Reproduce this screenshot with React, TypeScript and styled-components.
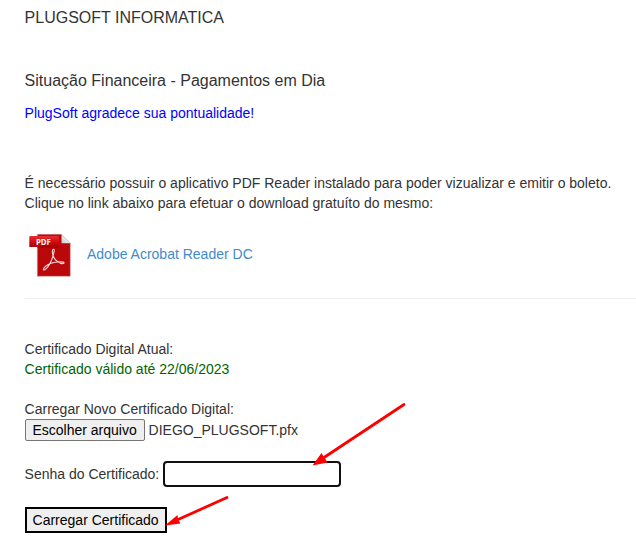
import { useState } from 'react';
import styled, { createGlobalStyle } from 'styled-components';

const GlobalStyle = createGlobalStyle`
  body {
    margin: 0;
    background: #fff;
    overflow: hidden;
  }
`;

const Page = styled.main`
  position: relative;
  height: 544px;
  padding: 8px 0 0 24.6px;
  box-sizing: border-box;
  color: #333;
  font-family: "Liberation Sans", Arial, sans-serif;
  font-size: 14px;
  line-height: 20px;
  white-space: nowrap;
`;

const Title = styled.h1<{ $gap: number }>`
  margin: 0 0 ${props => props.$gap}px;
  font-size: 16px;
  font-weight: 400;
  line-height: 20px;
`;

const Message = styled.p<{ $color?: string }>`
  margin: 0;
  color: ${props => props.$color || 'inherit'};
`;

const Instructions = styled.p`
  margin: 50px 0 20px;
`;

const ReaderRow = styled.div`
  display: flex;
  align-items: center;
  height: 43px;
  gap: 14px;
  padding-left: 3.4px;
`;

const ReaderLink = styled.a`
  color: #428bca;
  text-decoration: none;
  margin-top: -1px;
`;

const Divider = styled.hr`
  margin: 22px 0 40px;
  border: 0;
  border-top: 1px solid #eee;
`;

const Form = styled.form`
  margin-top: 20px;
`;

const FileRow = styled.div`
  display: flex;
  align-items: center;
  gap: 4px;
  height: 22px;
`;

const FileButton = styled.button`
  width: 120px;
  height: 22px;
  padding: 0;
  border: 1px solid #767676;
  border-radius: 2px;
  background: #efefef;
  color: #000;
  font: inherit;
  line-height: 18px;
`;

const PasswordRow = styled.label`
  display: flex;
  align-items: center;
  gap: 3.6px;
  height: 26px;
  margin: 20px 0;
`;

const PasswordInput = styled.input`
  width: 178px;
  height: 26px;
  box-sizing: border-box;
  padding: 2px 5px;
  border: 2px solid #101010;
  border-radius: 4px;
  outline: none;
  background: #fff;
  font: inherit;
`;

const SubmitButton = styled.button`
  display: block;
  width: 142px;
  height: 26px;
  padding: 0;
  border: 2px solid #000;
  background: #efefef;
  color: #000;
  font: inherit;
`;

const Annotations = styled.svg`
  position: absolute;
  inset: 0;
  pointer-events: none;
`;

const PdfLabel = styled.text`
  fill: #fff;
  font-family: "Open Sans", sans-serif;
  font-size: 9px;
  font-weight: 700;
`;

function PdfIcon() {
  return (
    <svg width="45" height="44" viewBox="0 0 45 44">
      <defs>
        <linearGradient id="ribbon" x1="0" y1="0" x2="0" y2="1">
          <stop offset="0" stopColor="#e8302f" />
          <stop offset="0.5" stopColor="#d20c10" />
          <stop offset="1" stopColor="#a60004" />
        </linearGradient>
        <linearGradient id="fold" x1="0" y1="1" x2="1" y2="0">
          <stop offset="0" stopColor="#c9c9c9" />
          <stop offset="0.65" stopColor="#f7f7f7" />
        </linearGradient>
      </defs>
      <path d="M9.3 1.3h24.2l8.8 9v33h-33z" fill="#ba0709" stroke="#d1a3a3" strokeWidth=".5" />
      <path d="M33.5 1.3l8.8 9h-8.8z" fill="url(#fold)" />
      <path d="M9.3 13.5h21.5V15H9.3z" fill="#900004" opacity=".6" />
      <path d="M2.3 3h27.2q1.5 0 1.5 1.5V12q0 2-2 2H1.3V4q0-1 1-1z" fill="url(#ribbon)" />
      <PdfLabel x="8" y="11.7" textLength="14.8" lengthAdjust="spacingAndGlyphs">PDF</PdfLabel>
      <path
        d="M26 16.5c-2-.8-2 3.2-1 6 1.2 3.8 3.5 6 7.5 7.7 2.9 1.3 4.8-.6 2.5-1.1-4-.9-12.1.3-16.4 3.4-3.2 2.2-4.4 5.5-1.7 4.2 3.1-1.5 6.7-8.4 8.1-13.8.8-3.2 1.9-5.8 1-6.4z"
        fill="none"
        stroke="#f8dddd"
        strokeWidth="1.1"
        strokeLinejoin="round"
      />
    </svg>
  );
}

export default function App() {
  const [password, setPassword] = useState('');

  return (
    <>
      <GlobalStyle />
      <Page>
        <Title $gap={43}>PLUGSOFT INFORMATICA</Title>
        <Title $gap={12}>Situação Financeira - Pagamentos em Dia</Title>
        <Message $color="#00f">PlugSoft agradece sua pontualidade!</Message>

        <Instructions>
          É necessário possuir o aplicativo PDF Reader instalado para poder vizualizar e emitir o boleto.<br />
          Clique no link abaixo para efetuar o download gratuíto do mesmo:
        </Instructions>

        <ReaderRow>
          <PdfIcon />
          <ReaderLink href="#">Adobe Acrobat Reader DC</ReaderLink>
        </ReaderRow>
        <Divider />

        <Message>Certificado Digital Atual:</Message>
        <Message $color="#006400">Certificado válido até 22/06/2023</Message>

        <Form onSubmit={(e) => e.preventDefault()}>
          <Message>Carregar Novo Certificado Digital:</Message>
          <FileRow>
            <FileButton type="button">Escolher arquivo</FileButton>
            <span>DIEGO_PLUGSOFT.pfx</span>
          </FileRow>
          <PasswordRow>
            Senha do Certificado:
            <PasswordInput
              type="password"
              value={password}
              onChange={(e) => setPassword(e.target.value)}
            />
          </PasswordRow>
          <SubmitButton type="submit">Carregar Certificado</SubmitButton>
        </Form>

        <Annotations width="636" height="544" viewBox="0 0 636 544">
          <g stroke="#f00" strokeWidth="2.8" strokeLinecap="round">
            <path d="M404 404.5L324 457.5" />
            <path d="M227 497.5L177 520" />
          </g>
          <g fill="#f00">
            <path d="M312.5 465.5l9-12.5 2.8 4.5 3.4 5z" />
            <path d="M165 525.5l12.5-10.5.5 4.5 2.5 4z" />
          </g>
        </Annotations>
      </Page>
    </>
  );
}
